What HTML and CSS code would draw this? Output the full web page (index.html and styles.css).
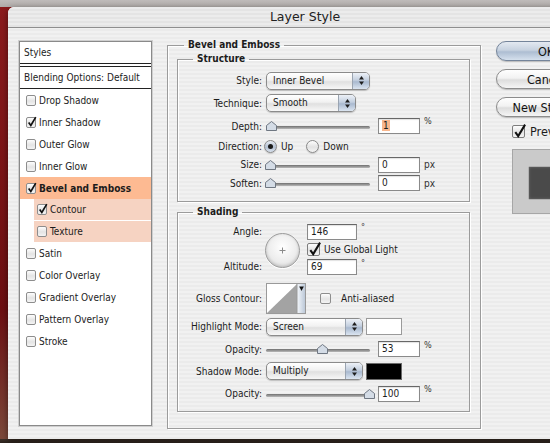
FILE: index.html
```html
<!DOCTYPE html>
<html lang="en">
<head>
    <meta charset="UTF-8">
    <title>Layer Style</title>
    <link rel="stylesheet" href="styles.css">
</head>
<body>
    <div class="dialog">
        <div class="titlebar">Layer Style</div>
        <div class="content">

            <!-- styles list -->
            <div class="sidebar">
                <div class="item head styles">Styles</div>
                <div class="item head blend">Blending Options: Default</div>
                <div class="item"><span class="cb"></span>Drop Shadow</div>
                <div class="item"><span class="cb on"><svg viewBox="0 0 12 12"><path d="M2 5.5 L4.6 9 L10.5 -1"/></svg></span>Inner Shadow</div>
                <div class="item"><span class="cb"></span>Outer Glow</div>
                <div class="item"><span class="cb"></span>Inner Glow</div>
                <div class="item current"><span class="cb on"><svg viewBox="0 0 12 12"><path d="M2 5.5 L4.6 9 L10.5 -1"/></svg></span>Bevel and Emboss</div>
                <div class="item sub"><span class="cb on"><svg viewBox="0 0 12 12"><path d="M2 5.5 L4.6 9 L10.5 -1"/></svg></span>Contour</div>
                <div class="item sub"><span class="cb"></span>Texture</div>
                <div class="item"><span class="cb"></span>Satin</div>
                <div class="item"><span class="cb"></span>Color Overlay</div>
                <div class="item"><span class="cb"></span>Gradient Overlay</div>
                <div class="item"><span class="cb"></span>Pattern Overlay</div>
                <div class="item"><span class="cb"></span>Stroke</div>
            </div>

            <!-- bevel and emboss settings -->
            <fieldset class="group outer">
                <legend>Bevel and Emboss</legend>

                <fieldset class="group structure">
                    <legend>Structure</legend>
                    <div class="row h23">
                        <label>Style:</label>
                        <div class="popup w104"><span>Inner Bevel</span><i class="arrows"><svg width="5" height="9"><polygon points="2.5,0 5,3.5 0,3.5"/><polygon points="0,5.5 5,5.5 2.5,9"/></svg></i></div>
                    </div>
                    <div class="row h22">
                        <label>Technique:</label>
                        <div class="popup w90"><span>Smooth</span><i class="arrows"><svg width="5" height="9"><polygon points="2.5,0 5,3.5 0,3.5"/><polygon points="0,5.5 5,5.5 2.5,9"/></svg></i></div>
                    </div>
                    <div class="row h24">
                        <label>Depth:</label>
                        <div class="slider"><div class="track"></div><svg class="thumb" style="left: 2px" width="11" height="10"><polygon points="0.5,4.5 5.5,0.5 10.5,4.5 10.5,9.5 0.5,9.5"/></svg></div>
                        <div class="field"><span class="sel">1</span></div>
                        <span class="unit sup">%</span>
                    </div>
                    <div class="row h17">
                        <label>Direction:</label>
                        <span class="radio on"></span><span class="opt">Up</span>
                        <span class="radio"></span><span class="opt">Down</span>
                    </div>
                    <div class="row h19">
                        <label>Size:</label>
                        <div class="slider"><div class="track"></div><svg class="thumb" style="left: 1px" width="11" height="10"><polygon points="0.5,4.5 5.5,0.5 10.5,4.5 10.5,9.5 0.5,9.5"/></svg></div>
                        <div class="field">0</div>
                        <span class="unit">px</span>
                    </div>
                    <div class="row h18">
                        <label>Soften:</label>
                        <div class="slider"><div class="track"></div><svg class="thumb" style="left: 1px" width="11" height="10"><polygon points="0.5,4.5 5.5,0.5 10.5,4.5 10.5,9.5 0.5,9.5"/></svg></div>
                        <div class="field">0</div>
                        <span class="unit">px</span>
                    </div>
                </fieldset>

                <fieldset class="group shading">
                    <legend>Shading</legend>
                    <div class="light">
                        <label class="l-angle">Angle:</label>
                        <div class="dial"><svg width="7" height="7"><path d="M3.5 0.5 V6.5 M0.5 3.5 H6.5"/></svg></div>
                        <div class="l-angle-val"><div class="field wide">146</div><span class="unit sup">°</span></div>
                        <div class="global"><span class="cb big on"><svg viewBox="0 0 14 14"><path d="M2.5 6.5 L5.6 10.8 L13 -1.5"/></svg></span>Use Global Light</div>
                        <label class="l-alt">Altitude:</label>
                        <div class="l-alt-val"><div class="field wide">69</div><span class="unit sup">°</span></div>
                    </div>
                    <div class="row h34 gloss">
                        <label>Gloss Contour:</label>
                        <svg class="contour" width="40" height="31">
                            <defs>
                                <linearGradient id="strip" x1="0" y1="0" x2="1" y2="0">
                                    <stop offset="0" stop-color="#f4f7fb"/>
                                    <stop offset="1" stop-color="#b9c6d6"/>
                                </linearGradient>
                            </defs>
                            <rect x="0.5" y="0.5" width="39" height="30" fill="#fff" stroke="#9a9a9a"/>
                            <polygon points="1,30 31,1 31,30" fill="#a3a3a3"/>
                            <rect x="31" y="0.5" width="8.5" height="30" fill="url(#strip)" stroke="#9a9a9a"/>
                            <polygon points="33.2,3.5 37.8,3.5 35.5,8" fill="#111"/>
                        </svg>
                        <span class="cb mid"></span><span class="opt">Anti-aliased</span>
                    </div>
                    <div class="row h23">
                        <label>Highlight Mode:</label>
                        <div class="popup w97"><span>Screen</span><i class="arrows"><svg width="5" height="9"><polygon points="2.5,0 5,3.5 0,3.5"/><polygon points="0,5.5 5,5.5 2.5,9"/></svg></i></div>
                        <span class="swatch"></span>
                    </div>
                    <div class="row h22">
                        <label>Opacity:</label>
                        <div class="slider"><div class="track"></div><svg class="thumb" style="left: 53px" width="11" height="10"><polygon points="0.5,4.5 5.5,0.5 10.5,4.5 10.5,9.5 0.5,9.5"/></svg></div>
                        <div class="field">53</div>
                        <span class="unit sup">%</span>
                    </div>
                    <div class="row h22">
                        <label>Shadow Mode:</label>
                        <div class="popup w97"><span>Multiply</span><i class="arrows"><svg width="5" height="9"><polygon points="2.5,0 5,3.5 0,3.5"/><polygon points="0,5.5 5,5.5 2.5,9"/></svg></i></div>
                        <span class="swatch black"></span>
                    </div>
                    <div class="row h23">
                        <label>Opacity:</label>
                        <div class="slider"><div class="track"></div><svg class="thumb" style="left: 100px" width="11" height="10"><polygon points="0.5,4.5 5.5,0.5 10.5,4.5 10.5,9.5 0.5,9.5"/></svg></div>
                        <div class="field">100</div>
                        <span class="unit sup">%</span>
                    </div>
                </fieldset>
            </fieldset>

            <!-- buttons + preview -->
            <div class="actions">
                <button type="button" class="btn default">OK</button>
                <button type="button" class="btn">Cancel</button>
                <button type="button" class="btn">New Style...</button>
                <div class="preview-toggle"><span class="cb big on"><svg viewBox="0 0 14 14"><path d="M2.5 6.5 L5.6 10.8 L13 -1.5"/></svg></span>Preview</div>
                <div class="preview"><div class="swatch-dark"></div></div>
            </div>
        </div>
    </div>
</body>
</html>
```

FILE: styles.css
```css
* { box-sizing: border-box; }

body {
    margin: 0;
    width: 550px;
    height: 443px;
    overflow: hidden;
    background:
        linear-gradient(#bfbbba, #b0aba8) top / 100% 7px no-repeat,
        linear-gradient(#3e3129, #2b221c) bottom / 100% 4px no-repeat,
        linear-gradient(#8c1b1d, #6c0f12 70%, #7c4b3c);
    font-family: "DejaVu Sans", sans-serif;
    font-stretch: condensed;
    font-size: 10px;
    color: #1c1c1c;
}

.dialog {
    margin: 7px 0 0 8px;
    width: 594px;
    height: 432px;
    background: repeating-linear-gradient(#f1f1f1 0 2px, #ebebeb 2px 4px);
    border-radius: 6px 6px 0 0;
    box-shadow: 0 2px 6px rgba(0, 0, 0, 0.5);
}

.titlebar {
    height: 21px;
    line-height: 20px;
    text-align: center;
    font-size: 12.5px;
    font-stretch: normal;
    color: #222;
    border-bottom: 1px solid #8f8f8f;
    border-radius: 6px 6px 0 0;
    background: repeating-linear-gradient(#ececec 0 2px, #e4e4e4 2px 4px);
}

.content {
    display: flex;
    align-items: flex-start;
    padding: 10px 0 0 11px;
}

/* ---------- styles list ---------- */
.sidebar {
    margin-top: 3px;
    width: 133px;
    height: 385px;
    flex: none;
    background: #fff;
    border: 1px solid #8a8a8a;
    box-shadow: 0 0 0 1px #cfcfcf;
}

.item {
    height: 22px;
    display: flex;
    align-items: center;
    gap: 3px;
    padding-left: 6px;
}

.item.head { padding-left: 4px; }
.item.styles { height: 22px; border-bottom: 1px solid #222; margin-bottom: 2px; }
.item.blend { height: 23px; border-top: 1px solid #222; border-bottom: 1px solid #222; }

.item.current { background: #fdba92; font-weight: bold; }
.item.sub { margin-left: 14px; padding-left: 3px; height: 21px; background: #f6d3c2; }
.item.sub + .item.sub { margin-top: 1px; }

/* ---------- checkboxes / radios ---------- */
.cb {
    position: relative;
    flex: none;
    width: 10px;
    height: 11px;
    border: 1px solid #8d8d8d;
    border-radius: 2px;
    background: linear-gradient(#fdfdfd, #e4e4e4 55%, #f4f4f4);
}

.cb svg {
    position: absolute;
    left: 0;
    top: 0;
    width: 10px;
    height: 10px;
    overflow: visible;
    fill: none;
    stroke: #111;
    stroke-width: 2;
}

.cb.mid { width: 11px; height: 11px; margin-left: 14px; margin-right: 6px; }

.cb.big {
    width: 13px;
    height: 13px;
    border-color: #7d7d7d;
}
.cb.big svg { width: 13px; height: 13px; stroke-width: 2.2; }

.radio {
    position: relative;
    flex: none;
    width: 13px;
    height: 13px;
    border-radius: 50%;
    border: 1px solid #888;
    background: linear-gradient(#fefefe, #e2e2e2 55%, #f4f4f4);
    box-shadow: 0 1px 1px rgba(0, 0, 0, 0.15);
}

.radio.on { background: linear-gradient(#e8edf4, #b3c0d2 55%, #d9e2ee); }
.radio.on::after {
    content: '';
    position: absolute;
    left: 3px;
    top: 3px;
    width: 5px;
    height: 5px;
    border-radius: 50%;
    background: #1a1a1a;
}

.opt { margin-left: 4px; }
.row .radio:first-of-type { margin-left: -2px; }
.row .opt + .radio { margin-left: 13px; }

/* ---------- group boxes ---------- */
.group {
    margin: 0;
    min-width: 0;
    border: 1px solid #9b9b9b;
    box-shadow: 1px 1px 0 #fff, inset 1px 1px 0 #fff;
}

.group legend {
    padding: 0 4px;
    line-height: 14px;
    font-weight: bold;
}

.outer {
    margin-left: 15px;
    width: 314px;
    height: 391px;
    flex: none;
    padding: 0 10px 0 9px;
}
.outer > legend { margin-left: 7px; }

.structure, .shading {
    width: 293px;
    padding: 3px 0 9px 0;
}
.structure > legend, .shading > legend { margin-left: 15px; }
.shading { margin-top: 3px; padding-bottom: 6px; }

.row {
    display: flex;
    align-items: center;
}

.row label {
    width: 84px;
    flex: none;
    text-align: right;
    margin-right: 4px;
}

.h17 { height: 17px; }
.h18 { height: 18px; }
.h19 { height: 19px; }
.h22 { height: 22px; }
.h23 { height: 23px; }
.h24 { height: 24px; }
.h34 { height: 34px; }
.gloss { margin-top: 6px; }

/* ---------- popup menus ---------- */
.popup {
    display: flex;
    height: 18px;
    border: 1px solid #8b8b8b;
    border-radius: 5px;
    background: linear-gradient(#ffffff, #f1f1f1 45%, #e0e0e0 55%, #f7f7f7);
    box-shadow: 0 1px 1px rgba(0, 0, 0, 0.2);
    overflow: hidden;
}

.popup span {
    flex: 1;
    padding-left: 6px;
    line-height: 16px;
}

.popup .arrows {
    width: 17px;
    display: flex;
    align-items: center;
    justify-content: center;
    border-left: 1px solid #9aa4b1;
    background: linear-gradient(#edf1f7, #c3cfdf 45%, #a9b9cf 55%, #dbe5f1);
}
.popup .arrows svg { fill: #1e1e1e; }

.w90 { width: 90px; }
.w97 { width: 97px; }
.w104 { width: 104px; }

/* ---------- sliders + fields ---------- */
.slider {
    position: relative;
    flex: none;
    width: 108px;
    height: 12px;
    margin-left: -2px;
}

.slider .track {
    position: absolute;
    left: 2px;
    right: 2px;
    top: 6px;
    height: 3px;
    border-radius: 2px;
    background: linear-gradient(#6f6f6f, #b9b9b9);
}

.slider .thumb {
    position: absolute;
    top: 1px;
    fill: #d4dce6;
    stroke: #6f7782;
}

.field {
    flex: none;
    width: 42px;
    height: 16px;
    margin-left: 6px;
    padding-left: 3px;
    line-height: 14px;
    background: #fff;
    border: 1px solid #8a8a8a;
    border-top-color: #676767;
    box-shadow: inset 0 1px 1px rgba(0, 0, 0, 0.12);
}

.field.wide { width: 50px; margin-left: 0; }
.field .sel { background: #f8b68d; padding: 0 1px; }

.unit { margin-left: 4px; color: #333; }
.unit.sup { align-self: flex-start; margin-top: 2px; font-size: 9px; }

/* ---------- light angle block ---------- */
.light {
    display: grid;
    grid-template-columns: 84px 37px auto;
    grid-template-rows: 19px 17px 17px;
    column-gap: 4px;
}

.light label { text-align: right; align-self: center; }
.l-angle { grid-column: 1; grid-row: 1; }
.l-alt { grid-column: 1; grid-row: 3; }

.dial {
    grid-column: 2;
    grid-row: 1 / 4;
    align-self: center;
    margin: 3px 0 0 -1px;
    width: 35px;
    height: 35px;
    border-radius: 50%;
    border: 1px solid #9c9c9c;
    background: radial-gradient(circle at 50% 40%, #ffffff, #ededed 55%, #d3d3d3);
    box-shadow: inset 0 -1px 3px rgba(0, 0, 0, 0.18), 0 1px 0 #fff;
    display: flex;
    align-items: center;
    justify-content: center;
}
.dial svg { stroke: #8a8a8a; stroke-width: 1; }

.l-angle-val, .l-alt-val {
    display: flex;
    align-items: center;
    grid-column: 3;
}
.l-angle-val { grid-row: 1; }
.l-alt-val { grid-row: 3; }
.l-angle-val .unit.sup, .l-alt-val .unit.sup { margin-top: 0; }

.global {
    grid-column: 3;
    grid-row: 2;
    display: flex;
    align-items: center;
    gap: 4px;
}

.contour { flex: none; }

.swatch {
    flex: none;
    width: 36px;
    height: 17px;
    margin-left: 3px;
    background: #fff;
    border: 1px solid #9a9a9a;
}
.swatch.black { background: #000; border-color: #6a6a6a; }

/* ---------- right column ---------- */
.actions {
    margin: 3px 0 0 15px;
    display: flex;
    flex-direction: column;
    gap: 8px;
    flex: none;
    width: 110px;
}

.btn {
    width: 100px;
    height: 20px;
    padding: 0;
    border-radius: 10px;
    border: 1px solid #8c8c8c;
    background: linear-gradient(#fefefe, #f2f2f2 45%, #dddddd 55%, #f5f5f5);
    box-shadow: 0 1px 1px rgba(0, 0, 0, 0.2);
    font-family: "DejaVu Sans", sans-serif;
    font-stretch: condensed;
    font-size: 12.5px;
    color: #111;
}

.btn.default {
    border-color: #74849a;
    background: linear-gradient(#e3e9f1, #c7d2e0 45%, #adbdd2 55%, #d5e0ed);
}

.preview-toggle {
    display: flex;
    align-items: center;
    gap: 5px;
    margin: -1px 0 0 16px;
    font-size: 12.5px;
}

.preview {
    margin: 2px 0 0 16px;
    width: 70px;
    height: 65px;
    background: #cacaca;
    border: 1px solid #a6a6a6;
    padding: 17px 0 0 16px;
}

.swatch-dark {
    width: 40px;
    height: 32px;
    background: #4a4a4a;
    box-shadow: inset 0 0 3px #6e6e6e, 0 0 1px #333;
}
```
